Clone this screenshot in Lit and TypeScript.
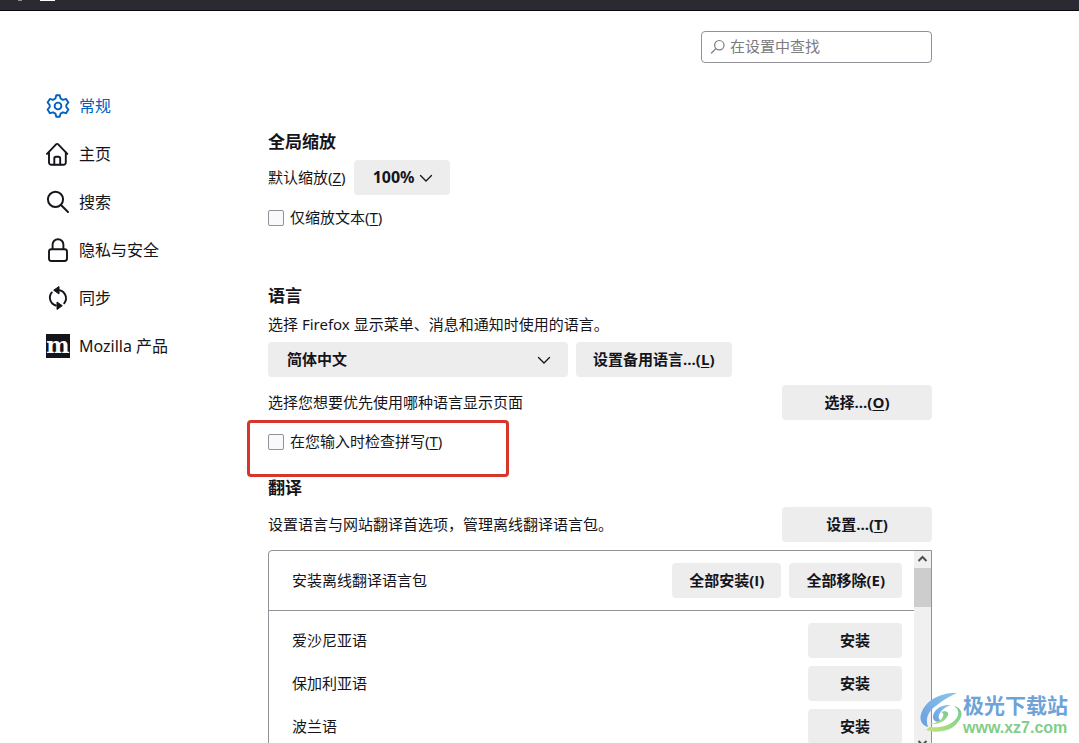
import { LitElement, html, css, svg } from "lit";
import { customElement } from "lit/decorators.js";

const icons = {
  general: svg`<g fill="none" stroke="currentColor" stroke-width="1.9" stroke-linejoin="round"><circle cx="12" cy="12" r="3.4"/><path d="M10.3 1.2h3.4l.9 3.3 2.3 1.3 3.2-.9 2.3 3.6-2.1 2.5v2l2.1 2.6-2.3 3.6-3.2-.9-2.3 1.3-.9 3.2h-3.4l-.9-3.2-2.3-1.3-3.2.9-2.300-3.600L3.700 13V11L1.600 8.500l2.300-3.600 3.200.9 2.300-1.300z"/></g>`,
  home: svg`<g fill="none" stroke="currentColor" stroke-width="1.900" stroke-linecap="round" stroke-linejoin="round"><path d="M1 11.900 10.300 2.200a1.200 1.200 0 0 1 1.700 0L21.300 11.900"/><path d="M3 10.500V20.500a2.300 2.300 0 0 0 2.300 2.300H17.500a2.300 2.300 0 0 0 2.300-2.300V10.500"/><path d="M8.300 22.500V16.500a1.700 1.700 0 0 1 1.700-1.700h2.500a1.700 1.700 0 0 1 1.700 1.700V22.500"/></g>`,
  search: svg`<g fill="none" stroke="currentColor" stroke-width="2" stroke-linecap="round"><circle cx="9.500" cy="9.300" r="7.600"/><path d="M15 15 22 22"/></g>`,
  lock: svg`<g fill="none" stroke="currentColor" stroke-width="1.900"><rect x="3" y="11.300" width="18" height="11.700" rx="2.400"/><path d="M6.600 11V6.600a5.400 5.400 0 0 1 10.800 0V11"/></g>`,
  sync: svg`<g fill="none" stroke="currentColor" stroke-width="1.900" stroke-linecap="round"><path d="M5.800 6.400A8.200 8.200 0 0 0 9.800 19.500"/><path d="M13.500 4.200A8.200 8.200 0 0 1 18.200 17.300"/></g><path fill="currentColor" stroke="currentColor" stroke-linejoin="round" d="M13 .5V8L7.700 4.200zM11 16V23.500L16.300 19.700z"/>`,
};

const chevron = html`<svg class="chevron" viewBox="0 0 14 14" aria-hidden="true"><path d="M1.500 4.500 7 10l5.500-5.500" fill="none" stroke="currentColor" stroke-width="1.300" stroke-linecap="round"/></svg>`;

@customElement("app-root")
export class AppRoot extends LitElement {
  static styles = css`
    :host {
      display: block;
      position: relative;
      height: 100vh;
      overflow: hidden;
      background: #fff;
      color: #15141a;
      font: 15px/20px "Noto Sans", "Noto Sans CJK SC", sans-serif;
    }
    * { box-sizing: border-box; }
    h2, p { margin: 0; }
    .chrome {
      display: flex;
      gap: 18px;
      height: 11px;
      padding-left: 18px;
      background: #2b2a33;
      border-bottom: 1px solid #08070c;
    }
    .chrome i { height: 1px; width: 4px; background: #8f8e96; }
    .chrome .tab { width: 15px; background: #fbfbfe; }
    .layout { display: flex; }
    nav {
      flex: 0 0 268px;
      display: flex;
      flex-direction: column;
      padding: 71px 0 0 46px;
    }
    .item {
      display: flex;
      align-items: center;
      gap: 9px;
      height: 48px;
      color: inherit;
      font-size: 16px;
      text-decoration: none;
    }
    .item.on { color: #0061c0; }
    .icon { width: 24px; height: 24px; flex: none; }
    .moz {
      background: #15141a;
      color: #fff;
      font: bold 22px/23px "DejaVu Serif", serif;
      display: flex;
      justify-content: center;
    }
    main { flex: 1; max-width: 664px; padding-top: 20px; min-width: 0; }
    .search {
      display: flex;
      align-items: center;
      gap: 4px;
      width: 231px;
      height: 32px;
      margin-left: auto;
      padding: 0 8px;
      border: 1px solid #919197;
      border-radius: 4px;
      color: #7b7b80;
    }
    .search svg { width: 16px; height: 16px; flex: none; }
    .search input {
      flex: 1;
      min-width: 0;
      border: 0;
      padding: 0 0 2px;
      outline: 0;
      background: none;
      font: inherit;
      color: inherit;
    }
    .search input::placeholder { color: inherit; opacity: 1; }
    h2 { font-size: 17px; line-height: 24px; font-weight: 700; }
    .zoom { margin-top: 67px; }
    .language { margin-top: 56px; }
    .translate { margin-top: 24px; }
    .row { display: flex; align-items: center; gap: 8px; }
    .row .grow { flex: 1; }
    .row .grow, .row > label, .head span, .pack span, .check span { padding-bottom: 2px; }
    .zoom .row { margin-top: 6px; }
    .language p { margin-top: 6px; }
    .language .row { margin-top: 8px; }
    .translate .row { margin-top: 7px; }
    .pick {
      display: grid;
      align-items: center;
      height: 35px;
      border-radius: 4px;
      background: #ededee;
    }
    .pick select, .pick .chevron { grid-area: 1 / 1; }
    .pick select {
      appearance: none;
      width: 100%;
      height: 35px;
      border: 0;
      padding: 0 32px 2px 19px;
      background: none;
      color: inherit;
      font: inherit;
      font-weight: 700;
    }
    .chevron { width: 14px; height: 14px; justify-self: end; margin-right: 17px; pointer-events: none; }
    .percent { width: 96px; }
    .percent select { font-size: 16px; }
    .locale { width: 300px; }
    button {
      height: 35px;
      border: 0;
      border-radius: 4px;
      padding: 0 17px 2px;
      background: #ededee;
      color: inherit;
      font: bold 15px/20px "Open Sans", "Noto Sans CJK SC", sans-serif;
      white-space: nowrap;
    }
    u { text-underline-offset: 2px; text-decoration-thickness: 1px; }
    .wide { width: 150px; }
    .check { position: relative; display: flex; align-items: center; gap: 6px; width: max-content; height: 20px; }
    .zoom .check { margin-top: 13px; }
    .language .check { margin-top: 12px; }
    .check input {
      appearance: none;
      width: 16px;
      height: 16px;
      margin: 0;
      border: 1px solid #919197;
      border-radius: 2px;
      background: #f9f9fb;
    }
    .mark {
      position: absolute;
      left: -21px;
      top: -12px;
      width: 262px;
      height: 57px;
      border: 3px solid #d9362b;
      border-radius: 4px;
      pointer-events: none;
    }
    .packs {
      display: flex;
      height: 202px;
      margin-top: 8px;
      border: 1px solid #919197;
      border-radius: 4px 0 0 4px;
      overflow: hidden;
    }
    .list { flex: 1; }
    .head, .pack {
      display: flex;
      align-items: center;
      gap: 8px;
      padding: 0 12px 0 23px;
    }
    .head { height: 60px; border-bottom: 1px solid #919197; margin-bottom: 8px; }
    .head span, .pack span { flex: 1; }
    .pack { height: 43px; }
    .pack button { width: 94px; }
    .bar {
      display: flex;
      flex-direction: column;
      width: 17px;
      background: #f0f0f0;
      color: #505050;
    }
    .bar svg { width: 17px; height: 17px; flex: none; }
    .thumb { height: 39px; background: #cdcdcd; }
    .bar .down { margin-top: auto; }
    .brand {
      position: absolute;
      right: 11px;
      bottom: 6px;
      display: flex;
      align-items: center;
      gap: 1px;
    }
    .brand svg { width: 42px; height: 42px; }
    .brand div { display: flex; flex-direction: column; }
    .name { font: bold 21px/30px "Noto Sans CJK SC", sans-serif; color: #6ea3d8; }
    .site { font: bold 16px/18px "Liberation Sans", sans-serif; color: #83cd88; }
  `;

  render() {
    const nav = [
      ["常规", icons.general],
      ["主页", icons.home],
      ["搜索", icons.search],
      ["隐私与安全", icons.lock],
      ["同步", icons.sync],
    ] as const;
    return html`
      <div class="chrome" aria-hidden="true"><i></i><i class="tab"></i></div>
      <div class="layout">
        <nav>
          ${nav.map(([label, icon], i) => html`<a class="item ${i === 0 ? "on" : ""}" href="#">
            <svg class="icon" viewBox="0 0 24 24" aria-hidden="true">${icon}</svg><span>${label}</span></a>`)}
          <a class="item" href="#"><span class="icon moz" aria-hidden="true">m</span><span>Mozilla 产品</span></a>
        </nav>
        <main>
          <label class="search">
            <svg viewBox="0 0 16 16" aria-hidden="true"><g fill="none" stroke="currentColor" stroke-width="1.200" stroke-linecap="round"><circle cx="9.300" cy="6.200" r="4.700"/><path d="M5.800 9.700 1.500 14"/></g></svg>
            <input type="text" placeholder="在设置中查找" aria-label="在设置中查找" />
          </label>

          <section class="zoom">
            <h2>全局缩放</h2>
            <div class="row">
              <label for="zoom">默认缩放(<u>Z</u>)</label>
              <div class="pick percent"><select id="zoom"><option>100%</option></select>${chevron}</div>
            </div>
            <label class="check"><input type="checkbox" /><span>仅缩放文本(<u>T</u>)</span></label>
          </section>

          <section class="language">
            <h2>语言</h2>
            <p><label for="locale">选择 Firefox 显示菜单、消息和通知时使用的语言。</label></p>
            <div class="row">
              <div class="pick locale"><select id="locale"><option>简体中文</option></select>${chevron}</div>
              <button>设置备用语言...(<u>L</u>)</button>
            </div>
            <div class="row">
              <span class="grow">选择您想要优先使用哪种语言显示页面</span>
              <button class="wide">选择...(<u>O</u>)</button>
            </div>
            <label class="check"><input type="checkbox" /><span>在您输入时检查拼写(<u>T</u>)</span><i class="mark"></i></label>
          </section>

          <section class="translate">
            <h2>翻译</h2>
            <div class="row">
              <span class="grow">设置语言与网站翻译首选项，管理离线翻译语言包。</span>
              <button class="wide">设置...(<u>T</u>)</button>
            </div>
            <div class="packs">
              <div class="list">
                <div class="head"><span>安装离线翻译语言包</span><button>全部安装(I)</button><button>全部移除(E)</button></div>
                ${["爱沙尼亚语", "保加利亚语", "波兰语"].map((n) => html`<div class="pack"><span>${n}</span><button>安装</button></div>`)}
              </div>
              <div class="bar" aria-hidden="true">
                <svg viewBox="0 0 17 17"><path d="M4.500 10 8.500 6l4 4" fill="none" stroke="currentColor" stroke-width="2"/></svg>
                <div class="thumb"></div>
                <svg class="down" viewBox="0 0 17 17"><path d="M4.500 7 8.500 11l4-4" fill="none" stroke="currentColor" stroke-width="2"/></svg>
              </div>
            </div>
          </section>
        </main>
      </div>
      <div class="brand">
        <svg viewBox="0 0 42 42" aria-hidden="true">
          <defs>
            <linearGradient id="sky" x1="0" y1="1" x2="1" y2="0"><stop offset="0" stop-color="#6a9fe0"/><stop offset="1" stop-color="#8ac6ea"/></linearGradient>
            <linearGradient id="leaf" x1="0" y1="1" x2="1" y2="0"><stop offset="0" stop-color="#c5e27c"/><stop offset="1" stop-color="#6fcb90"/></linearGradient>
          </defs>
          <path fill="url(#sky)" d="M37 1C22 0 5 8 1 22c-2 7 2 12 7 13-3-8 0-16 9-22C23 8 30 4 37 1z"/>
          <path fill="url(#sky)" d="M31 13c-10-1-18 5-18 12 0 4 4 6 9 4-3-1-4-3-3-6 2-5 6-8 12-10z"/>
          <path fill="url(#leaf)" d="M34 14c5 3 6 9 1 14-6 6-15 8-24 7-2 0-3 1-5 3 12 4 26 1 32-8 6-7 4-14-4-16z"/>
          <path fill="url(#leaf)" d="M21 20c6-2 9 1 6 5-3 5-10 8-17 7 7-1 12-4 13-8 1-2 0-3-2-4z"/>
        </svg>
        <div><span class="name">极光下载站</span><span class="site">www.xz7.com</span></div>
      </div>
    `;
  }
}
